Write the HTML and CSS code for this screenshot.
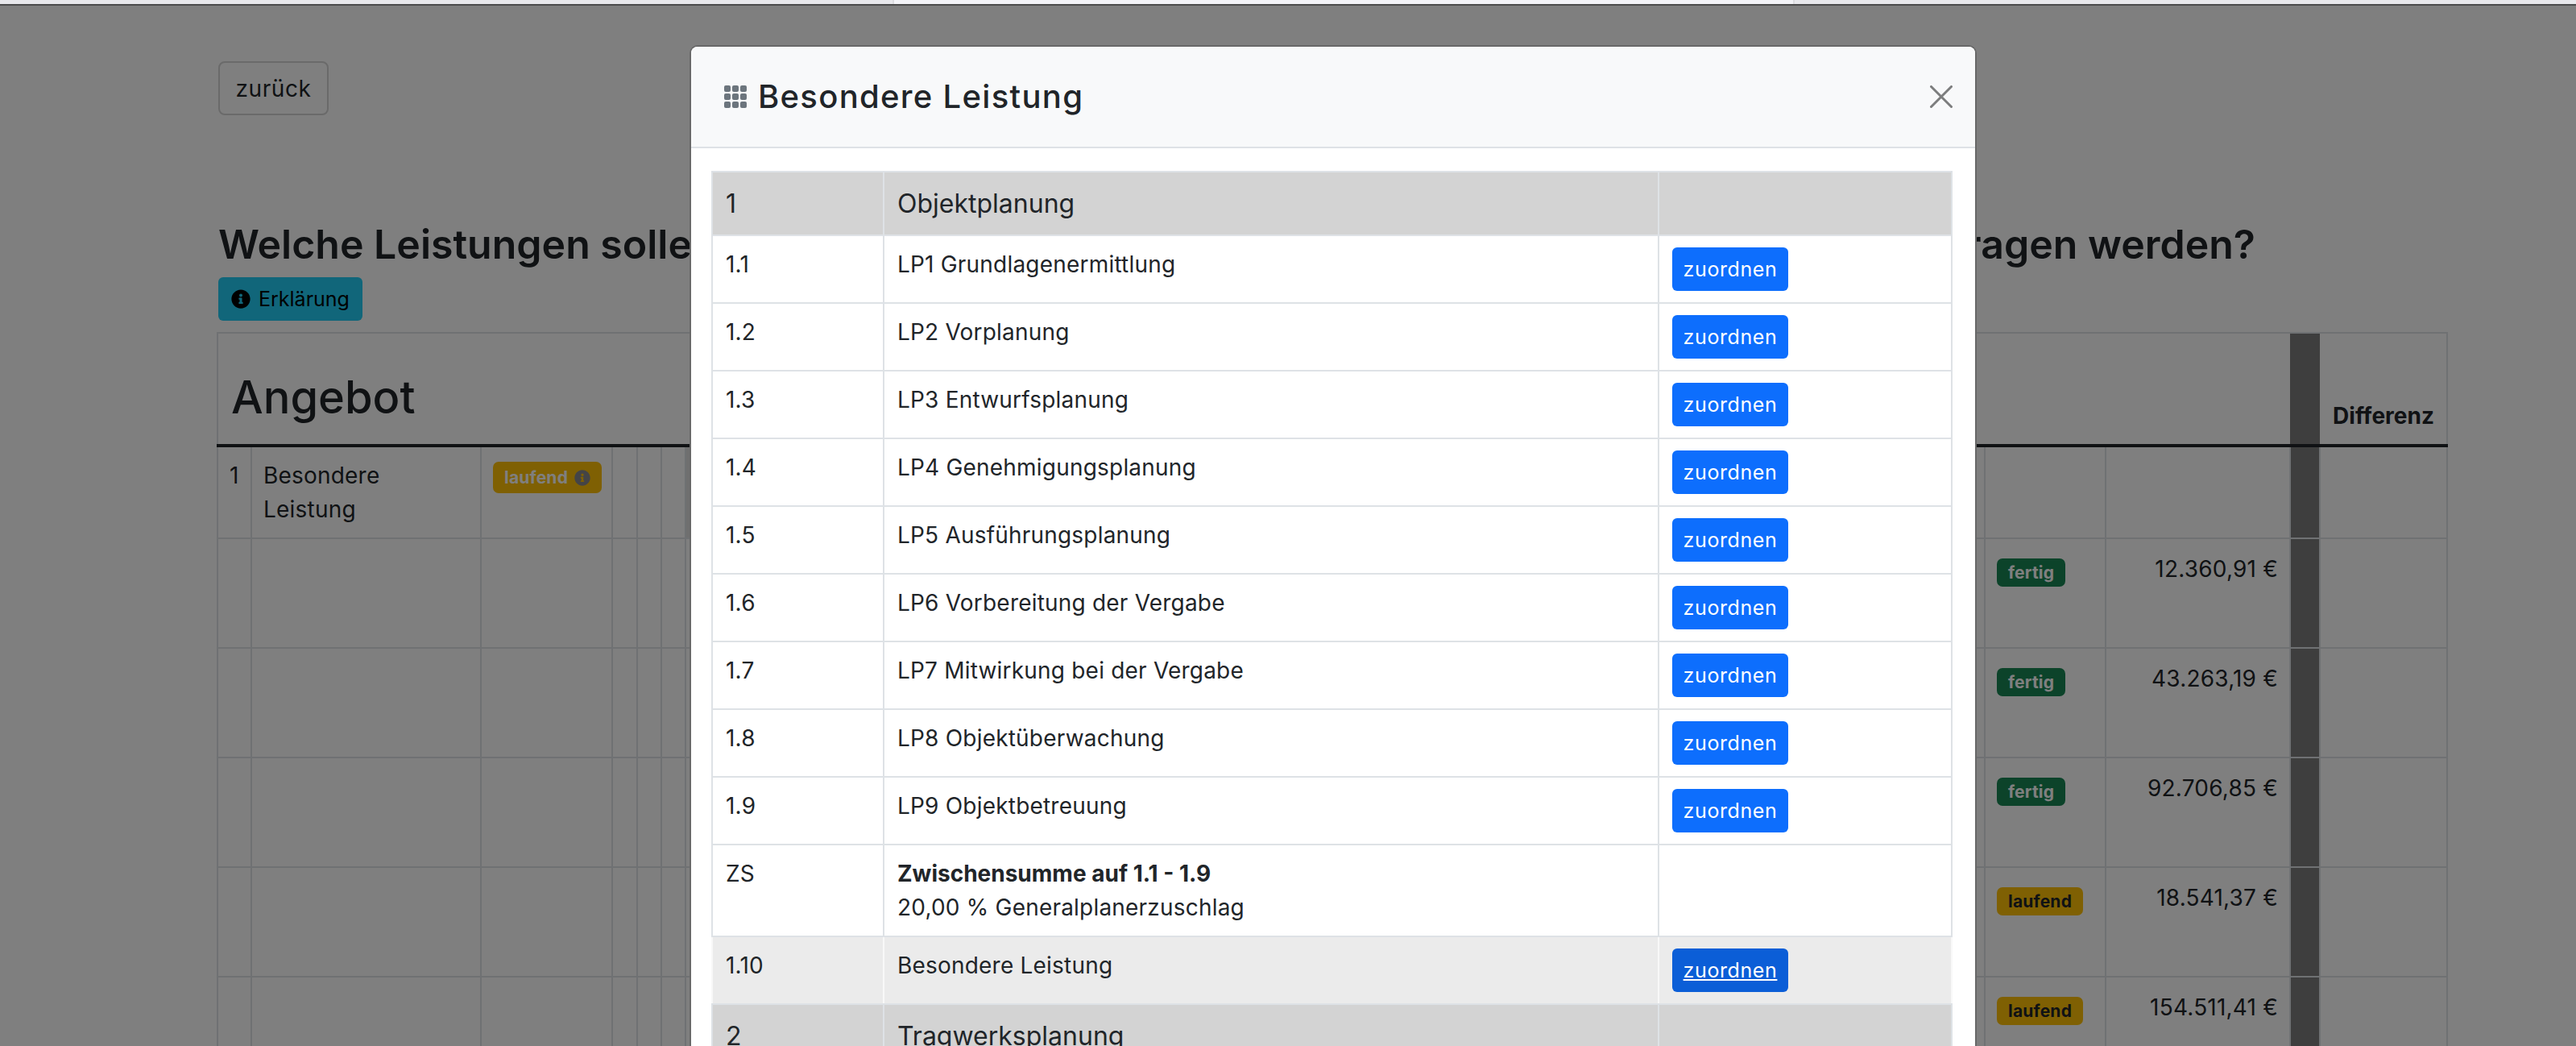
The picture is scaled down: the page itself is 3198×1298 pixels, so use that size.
FILE: index.html
```html
<!DOCTYPE html>
<html lang="de">
    <head>
        <meta charset="UTF-8">
        <title>Besondere Leistung</title>
        <link rel="stylesheet" href="styles.css">
    </head>
    <body>
        <div class="tabbar">
            <div class="tab"></div>
            <div class="tab tabActive"></div>
            <div class="tab"></div>
        </div>

        <!-- Seite hinter dem Dialog -->
        <div class="page">
            <button type="button" class="btnBack">zurück</button>
            <h2 class="question">
                <span>Welche Leistungen sollen in die</span>
                <span>Rechnung übertragen werden?</span>
            </h2>
            <button type="button" class="btnInfo">
                <svg class="iconInfo" viewBox="0 0 512 512"><path d="M256 8C119.043 8 8 119.083 8 256c0 136.997 111.043 248 248 248s248-111.003 248-248C504 119.083 392.957 8 256 8zm0 110c23.196 0 42 18.804 42 42s-18.804 42-42 42-42-18.804-42-42 18.804-42 42-42zm56 254c0 6.627-5.373 12-12 12h-88c-6.627 0-12-5.373-12-12v-24c0-6.627 5.373-12 12-12h12v-64h-12c-6.627 0-12-5.373-12-12v-24c0-6.627 5.373-12 12-12h64c6.627 0 12 5.373 12 12v100h12c6.627 0 12 5.373 12 12v24z"/></svg>
                Erklärung
            </button>
            <table class="offer">
                <colgroup>
                    <col class="c42"><col class="c285"><col class="c163"><col class="c31"><col class="c30"><col class="c30">
                    <col class="c148"><col class="c1465"><col class="c150"><col class="c229"><col class="c37"><col class="c158">
                </colgroup>
                <tr class="offerHead">
                    <th colspan="10" class="offerTitle">Angebot</th>
                    <th class="gap"></th>
                    <th>Differenz</th>
                </tr>
                <tr class="rowFirst">
                    <td>1</td>
                    <td>Besondere Leistung</td>
                    <td><span class="badge badgeRun badgeBig">laufend <svg class="iconBadge" viewBox="0 0 512 512"><path d="M256 8C119.043 8 8 119.083 8 256c0 136.997 111.043 248 248 248s248-111.003 248-248C504 119.083 392.957 8 256 8zm0 110c23.196 0 42 18.804 42 42s-18.804 42-42 42-42-18.804-42-42 18.804-42 42-42zm56 254c0 6.627-5.373 12-12 12h-88c-6.627 0-12-5.373-12-12v-24c0-6.627 5.373-12 12-12h12v-64h-12c-6.627 0-12-5.373-12-12v-24c0-6.627 5.373-12 12-12h64c6.627 0 12 5.373 12 12v100h12c6.627 0 12 5.373 12 12v24z"/></svg></span></td>
                    <td></td><td></td><td></td><td class="shade"></td><td></td><td></td><td></td><td class="gap"></td><td></td>
                </tr>
                <tr>
                    <td></td><td></td><td></td><td></td><td></td><td></td><td></td><td></td>
                    <td><span class="badge badgeDone">fertig</span></td>
                    <td class="amount">12.360,91 €</td><td class="gap"></td><td></td>
                </tr>
                <tr>
                    <td></td><td></td><td></td><td></td><td></td><td></td><td></td><td></td>
                    <td><span class="badge badgeDone">fertig</span></td>
                    <td class="amount">43.263,19 €</td><td class="gap"></td><td></td>
                </tr>
                <tr>
                    <td></td><td></td><td></td><td></td><td></td><td></td><td></td><td></td>
                    <td><span class="badge badgeDone">fertig</span></td>
                    <td class="amount">92.706,85 €</td><td class="gap"></td><td></td>
                </tr>
                <tr>
                    <td></td><td></td><td></td><td></td><td></td><td></td><td></td><td></td>
                    <td><span class="badge badgeRun">laufend</span></td>
                    <td class="amount">18.541,37 €</td><td class="gap"></td><td></td>
                </tr>
                <tr>
                    <td></td><td></td><td></td><td></td><td></td><td></td><td></td><td></td>
                    <td><span class="badge badgeRun">laufend</span></td>
                    <td class="amount">154.511,41 €</td><td class="gap"></td><td></td>
                </tr>
            </table>
        </div>

        <div class="backdrop"></div>

        <!-- Dialog -->
        <div class="modal">
            <div class="modalHead">
                <svg class="iconGrid" viewBox="0 0 16 16">
                    <rect x="1" y="1" width="4" height="4" rx="1"/><rect x="6" y="1" width="4" height="4" rx="1"/><rect x="11" y="1" width="4" height="4" rx="1"/>
                    <rect x="1" y="6" width="4" height="4" rx="1"/><rect x="6" y="6" width="4" height="4" rx="1"/><rect x="11" y="6" width="4" height="4" rx="1"/>
                    <rect x="1" y="11" width="4" height="4" rx="1"/><rect x="6" y="11" width="4" height="4" rx="1"/><rect x="11" y="11" width="4" height="4" rx="1"/>
                </svg>
                <h5 class="modalTitle">Besondere Leistung</h5>
                <svg class="iconClose" viewBox="0 0 28 28"><path d="M1.5 1.5l25 25M26.5 1.5l-25 25"/></svg>
            </div>
            <div class="modalBody">
                <table class="list">
                    <colgroup><col class="c213"><col class="c962"><col class="c364"></colgroup>
                    <tr class="group"><td>1</td><td>Objektplanung</td><td></td></tr>
                    <tr><td>1.1</td><td>LP1 Grundlagenermittlung</td><td><a class="btnAssign">zuordnen</a></td></tr>
                    <tr><td>1.2</td><td>LP2 Vorplanung</td><td><a class="btnAssign">zuordnen</a></td></tr>
                    <tr><td>1.3</td><td>LP3 Entwurfsplanung</td><td><a class="btnAssign">zuordnen</a></td></tr>
                    <tr><td>1.4</td><td>LP4 Genehmigungsplanung</td><td><a class="btnAssign">zuordnen</a></td></tr>
                    <tr><td>1.5</td><td>LP5 Ausführungsplanung</td><td><a class="btnAssign">zuordnen</a></td></tr>
                    <tr><td>1.6</td><td>LP6 Vorbereitung der Vergabe</td><td><a class="btnAssign">zuordnen</a></td></tr>
                    <tr><td>1.7</td><td>LP7 Mitwirkung bei der Vergabe</td><td><a class="btnAssign">zuordnen</a></td></tr>
                    <tr><td>1.8</td><td>LP8 Objektüberwachung</td><td><a class="btnAssign">zuordnen</a></td></tr>
                    <tr><td>1.9</td><td>LP9 Objektbetreuung</td><td><a class="btnAssign">zuordnen</a></td></tr>
                    <tr class="sum"><td>ZS</td><td><b>Zwischensumme auf 1.1 - 1.9</b><br>20,00 % Generalplanerzuschlag</td><td></td></tr>
                    <tr class="hover"><td>1.10</td><td>Besondere Leistung</td><td><a class="btnAssign btnHover">zuordnen</a></td></tr>
                    <tr class="group"><td>2</td><td>Tragwerksplanung</td><td></td></tr>
                </table>
            </div>
        </div>
    </body>
</html>
```

FILE: styles.css
```css
*{
    box-sizing: border-box;
}
html, body{
    height: 100%;
}
body{
    margin: 0;
    overflow: hidden;
    background: white;
    color: #212529;
    font-family: Inter, "Noto Sans", sans-serif;
    font-size: 28px;
    line-height: 42px;
    letter-spacing: 0.2px;
}

/* Tabs vom Browser, liegen ueber dem Backdrop */
.tabbar{
    position: relative;
    z-index: 3;
    display: flex;
    height: 7px;
    border-bottom: 2px solid #4c4c4c;
    background: #e8e8ec;
}
.tab{
    flex: 0 0 1108px;
}
.tabActive{
    flex-basis: 1120px;
    background: #f3f3f7;
    border-left: 2px solid #dcdce0;
    border-right: 2px solid #dcdce0;
}

/* Seite */
.page{
    width: 2768px;
    margin-left: 271px;
    padding-top: 69px;
}
.btnBack{
    display: block;
    width: 137px;
    height: 67px;
    padding: 0;
    background: white;
    border: 2px solid #d4d4d4;
    border-radius: 8px;
    color: #212529;
    font: inherit;
    letter-spacing: 0.6px;
}
.question{
    display: flex;
    justify-content: space-between;
    width: 2529px;
    margin: 130px 0 0;
    font-size: 50px;
    line-height: 60px;
    font-weight: 600;
    letter-spacing: 0;
}
.btnInfo{
    display: flex;
    align-items: center;
    gap: 10px;
    width: 179px;
    height: 54px;
    margin-top: 11px;
    padding: 0 0 0 16px;
    background: #22ccf4;
    border: 0;
    border-radius: 6px;
    color: black;
    font: inherit;
    font-size: 25px;
}
.iconInfo{
    width: 24px;
    height: 24px;
}
.offer{
    width: 2768px;
    margin-top: 14px;
    margin-left: -2px;
    table-layout: fixed;
    border-collapse: collapse;
    border: 2px solid #dee2e6;
    border-bottom: 0;
}
.offer td{
    height: 136px;
    padding: 16px 14px;
    vertical-align: top;
    border: 2px solid #dee2e6;
}
.offerHead th{
    height: 140px;
    padding: 0 16px 14px;
    text-align: left;
    vertical-align: bottom;
    border-bottom: 4px solid #212529;
    letter-spacing: 0;
}
.offer .offerTitle{
    padding-bottom: 24px;
    font-size: 56px;
    line-height: 68px;
    font-weight: 500;
}
.offer .gap{
    padding: 0;
    background: #7d7d7d;
}
.offer .rowFirst td{
    height: 112px;
    padding-top: 14px;
    padding-bottom: 14px;
}
.offer .shade{
    background: #dedede;
}
.offer .amount{
    text-align: right;
}
.badge{
    display: inline-block;
    height: 35px;
    margin-top: 8px;
    padding: 0 14px;
    border-radius: 7px;
    font-size: 21px;
    line-height: 35px;
    font-weight: 700;
    vertical-align: top;
}
.badgeDone{
    background: #198754;
    color: white;
}
.badgeRun{
    background: #ffc107;
    color: #212529;
}
.badgeBig{
    display: inline-flex;
    align-items: center;
    gap: 8px;
    height: 39px;
    margin-top: 4px;
    color: white;
}
.iconBadge{
    width: 20px;
    height: 20px;
    fill: #88898c;
}
.c42{width: 42px;}
.c285{width: 285px;}
.c163{width: 163px;}
.c31{width: 31px;}
.c30{width: 30px;}
.c148{width: 148px;}
.c1465{width: 1465px;}
.c150{width: 150px;}
.c229{width: 229px;}
.c37{width: 37px;}
.c158{width: 158px;}

/* Dialog */
.backdrop{
    position: fixed;
    top: 0;
    left: 0;
    right: 0;
    bottom: 0;
    z-index: 1;
    background: rgba(0, 0, 0, 0.5);
}
.modal{
    position: absolute;
    top: 56px;
    left: 856px;
    z-index: 2;
    width: 1598px;
    height: 1300px;
    overflow: hidden;
    background: white;
    border: 2px solid #686868;
    border-bottom: 0;
    border-radius: 10px 10px 0 0;
}
.modalHead{
    display: flex;
    align-items: center;
    height: 126px;
    padding: 0 28px 0 39px;
    background: #f8f9fa;
    border-bottom: 2px solid #dee2e6;
}
.iconGrid{
    width: 32px;
    height: 32px;
    margin-right: 12px;
    fill: #6c757d;
}
.modalTitle{
    flex: 1;
    margin: 0;
    font-size: 40px;
    line-height: 48px;
    font-weight: 500;
    letter-spacing: 1.3px;
}
.iconClose{
    width: 28px;
    height: 28px;
    fill: none;
    stroke: #7c7d7d;
    stroke-width: 3;
    stroke-linecap: round;
}
.modalBody{
    padding: 28px 28px 0 25px;
}
.list{
    width: 1539px;
    table-layout: fixed;
    border-collapse: collapse;
}
.list td{
    height: 84px;
    padding: 14px 16px;
    vertical-align: top;
    border: 2px solid #dee2e6;
}
.list b{
    letter-spacing: 0;
}
.list .group td{
    height: 79px;
    padding-top: 18px;
    background: #d3d3d3;
    font-size: 32px;
    letter-spacing: 0;
}
.list .sum td{
    height: 114px;
}
.list .hover td{
    background: #ebebeb;
    border-left-color: #f8f8f8;
    border-right-color: #f8f8f8;
}
.btnAssign{
    display: block;
    width: 144px;
    height: 54px;
    background: #0d6efd;
    border-radius: 6px;
    color: white;
    font-size: 25px;
    line-height: 54px;
    letter-spacing: 0.6px;
    text-align: center;
}
.btnHover{
    background: #0b5ed7;
    text-decoration: underline;
}
.c213{width: 213px;}
.c962{width: 962px;}
.c364{width: 364px;}
```
